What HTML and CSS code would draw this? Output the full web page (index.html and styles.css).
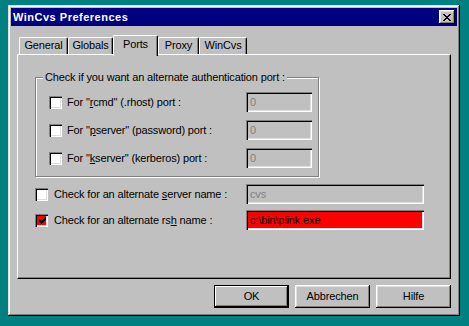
FILE: index.html
```html
<!DOCTYPE html>
<html lang="en">
<head>
    <meta charset="UTF-8">
    <title>WinCvs Preferences</title>
    <link rel="stylesheet" href="styles.css">
</head>
<body>
    <div class="window">
        <div class="titlebar">
            <span class="title">WinCvs Preferences</span>
            <div class="close-btn">
                <svg width="8" height="7" viewBox="0 0 8 7">
                    <path d="M0 0h2v1h1v1h2v-1h1v-1h2v1h-1v1h-1v1h-1v1h1v1h1v1h1v1h-2v-1h-1v-1h-2v1h-1v1h-2v-1h1v-1h1v-1h1v-1h-1v-1h-1v-1h-1z" fill="#000"/>
                </svg>
            </div>
        </div>

        <div class="tabs">
            <div class="tab tab-general">General</div>
            <div class="tab tab-globals">Globals</div>
            <div class="tab tab-ports active">Ports</div>
            <div class="tab tab-proxy">Proxy</div>
            <div class="tab tab-wincvs">WinCvs</div>
        </div>

        <div class="panel">
            <div class="group">
                <span class="group-title">Check if you want an alternate authentication port :</span>
                <div class="row">
                    <span class="checkbox"></span>
                    <span class="label">For "<u>r</u>cmd" (.rhost) port :</span>
                    <span class="field port disabled">0</span>
                </div>
                <div class="row">
                    <span class="checkbox"></span>
                    <span class="label">For "<u>p</u>server" (password) port :</span>
                    <span class="field port disabled">0</span>
                </div>
                <div class="row">
                    <span class="checkbox"></span>
                    <span class="label">For "<u>k</u>server" (kerberos) port :</span>
                    <span class="field port disabled">0</span>
                </div>
            </div>

            <div class="row wide first">
                <span class="checkbox"></span>
                <span class="label">Check for an alternate <u>s</u>erver name :</span>
                <span class="field name disabled">cvs</span>
            </div>
            <div class="row wide second">
                <span class="checkbox checked">
                    <svg width="7" height="7" viewBox="0 0 7 7">
                        <path d="M6 0h1v3h-1v1h-1v1h-1v1h-1v1h-1v-1h-1v-1h-1v-3h1v1h1v1h1v-1h1v-1h1z" fill="#000"/>
                    </svg>
                </span>
                <span class="label">Check for an alternate rs<u>h</u> name :</span>
                <span class="field name alert">c:\bin\plink.exe</span>
            </div>
        </div>

        <div class="buttons">
            <div class="btn default">OK</div>
            <div class="btn">Abbrechen</div>
            <div class="btn">Hilfe</div>
        </div>
    </div>
</body>
</html>
```

FILE: styles.css
```css
* {
    margin: 0;
    padding: 0;
    box-sizing: border-box;
}

body {
    background: #008080;
    font-family: 'Liberation Sans', Arial, sans-serif;
    font-size: 11px;
    letter-spacing: -0.15px;
    color: #000;
    width: 469px;
    height: 326px;
    overflow: hidden;
}

.window {
    margin: 5px 0 0 8px;
    width: 452px;
    height: 311px;
    padding: 3px;
    background: #c0c0c0;
    box-shadow: inset -1px -1px 0 #000, inset 1px 1px 0 #dfdfdf,
                inset -2px -2px 0 #808080, inset 2px 2px 0 #fff;
}

.titlebar {
    height: 18px;
    background: #000080;
    color: #fff;
    display: flex;
    align-items: center;
    justify-content: space-between;
    padding: 0 2px 0 2px;
}

.title {
    font-weight: bold;
    font-size: 11px;
    letter-spacing: 0.5px;
}

.close-btn {
    width: 16px;
    height: 14px;
    background: #c0c0c0;
    display: flex;
    align-items: center;
    justify-content: center;
    padding-right: 1px;
    box-shadow: inset -1px -1px 0 #000, inset 1px 1px 0 #fff,
                inset -2px -2px 0 #808080, inset 2px 2px 0 #dfdfdf;
}

.close-btn svg {
    display: block;
}

/* tab strip */
.tabs {
    display: flex;
    align-items: flex-end;
    height: 19px;
    margin: 9px 6px 0 6px;
    padding-left: 2px;
}

.tab {
    height: 17px;
    line-height: 15px;
    text-align: center;
    border-top: 1px solid #fff;
    border-left: 1px solid #fff;
    border-right: 1px solid #000;
    border-radius: 2px 2px 0 0;
    box-shadow: inset -1px 0 0 #808080;
    background: #c0c0c0;
}

.tab.active {
    height: 21px;
    margin-bottom: -2px;
    line-height: 16px;
    position: relative;
    z-index: 1;
}

.tab-general { width: 49px; }
.tab-globals { width: 45px; }
.tab-ports { width: 45px; }
.tab-proxy { width: 41px; }
.tab-wincvs { width: 48px; }

.panel {
    height: 225px;
    margin: 0 6px;
    padding: 22px 0 0 17px;
    border-top: 1px solid #fff;
    border-left: 1px solid #fff;
    border-right: 1px solid #000;
    border-bottom: 1px solid #000;
    box-shadow: inset -1px -1px 0 #808080;
}

.group {
    position: relative;
    width: 284px;
    height: 100px;
    padding: 14px 6px 0 13px;
    border: 1px solid #808080;
    box-shadow: inset 1px 1px 0 #fff, 1px 1px 0 #fff;
    display: flex;
    flex-direction: column;
    gap: 8px;
}

.group-title {
    position: absolute;
    top: -7px;
    left: 7px;
    padding: 0 2px;
    line-height: 13px;
    background: #c0c0c0;
}

.row {
    display: flex;
    align-items: center;
    height: 20px;
}

.row .label {
    flex: 1;
    margin-left: 5px;
    white-space: nowrap;
}

.row.wide {
    width: 389px;
}

.row.wide .label {
    margin-left: 6px;
}

.row.first { margin-top: 7px; }
.row.second { margin-top: 6px; }

.checkbox {
    width: 13px;
    height: 13px;
    flex: none;
    background: #fff;
    display: flex;
    align-items: center;
    justify-content: center;
    box-shadow: inset 1px 1px 0 #808080, inset 2px 2px 0 #000,
                inset -1px -1px 0 #fff, inset -2px -2px 0 #dfdfdf;
}

.checkbox.checked {
    background: #f00;
    padding: 1px 0 0 1px;
}

.checkbox svg {
    display: block;
}

.field {
    height: 20px;
    flex: none;
    padding: 3px 0 0 4px;
    line-height: 14px;
    box-shadow: inset 1px 1px 0 #808080, inset 2px 2px 0 #000,
                inset -1px -1px 0 #fff, inset -2px -2px 0 #dfdfdf;
}

.field.port { width: 66px; }
.field.name { width: 178px; }

.field.disabled {
    background: #c0c0c0;
    color: #808080;
}

.field.alert {
    background: #f00;
    color: #000;
}

.buttons {
    display: flex;
    justify-content: flex-end;
    gap: 6px;
    margin: 6px 6px 0 0;
}

.btn {
    width: 75px;
    height: 23px;
    line-height: 22px;
    text-align: center;
    background: #c0c0c0;
    box-shadow: inset -1px -1px 0 #000, inset 1px 1px 0 #fff,
                inset -2px -2px 0 #808080, inset 2px 2px 0 #dfdfdf;
}

.btn.default {
    border: 1px solid #000;
    line-height: 20px;
    box-shadow: inset -1px -1px 0 #000, inset 1px 1px 0 #fff,
                inset -2px -2px 0 #808080;
}
```
